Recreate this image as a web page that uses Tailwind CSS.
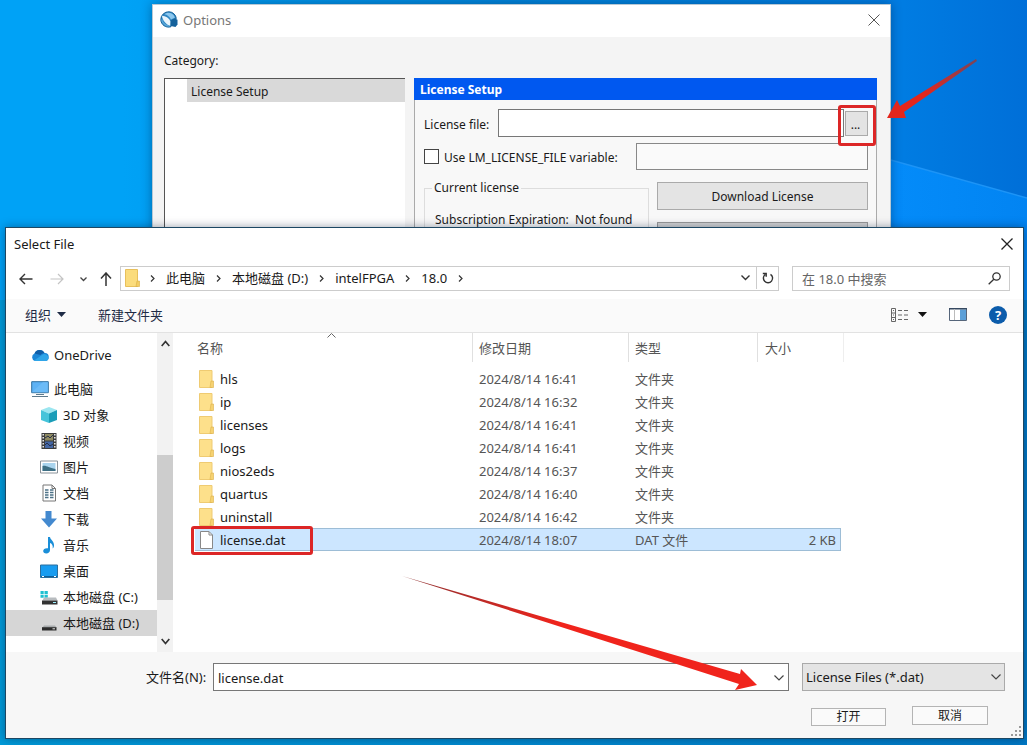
<!DOCTYPE html>
<html lang="zh-CN">
<head>
<meta charset="utf-8">
<meta name="viewport" content="width=device-width, initial-scale=1">
<title>Select File</title>
<script src="https://cdn.jsdelivr.net/npm/@tailwindcss/browser@4"></script>
</head>
<body class="relative min-h-screen overflow-hidden bg-[#0086dc] font-['Noto_Sans','Noto_Sans_CJK_SC',sans-serif] text-[13px] leading-5 text-[#1a1a1a]">

<svg class="absolute inset-0 h-full w-full" viewBox="0 0 1027 745" preserveAspectRatio="none" aria-hidden="true">
  <defs>
    <linearGradient id="sky" x1="0" y1="0" x2="1" y2="0">
      <stop offset="0" stop-color="#00a2f6"/><stop offset=".12" stop-color="#00a2f6"/><stop offset=".5" stop-color="#0084da"/><stop offset=".88" stop-color="#007ce2"/><stop offset="1" stop-color="#006fd8"/>
    </linearGradient>
    <linearGradient id="low" x1="0" y1="0" x2="1" y2="0">
      <stop offset="0" stop-color="#009ad8"/><stop offset="1" stop-color="#0078c4"/>
    </linearGradient>
    <linearGradient id="beam" x1="0" y1="0" x2="1" y2="0">
      <stop offset="0" stop-color="#048cfa"/><stop offset="1" stop-color="#0284f2"/>
    </linearGradient>
  </defs>
  <rect width="1027" height="745" fill="url(#sky)"/>
  <path d="M880 157L1027 198V300H880z" fill="url(#beam)"/>
  <path d="M880 157L1027 198" stroke="#1d94f6" stroke-width="1.5"/>
  <rect y="300" width="1027" height="445" fill="url(#low)"/>
</svg>

<!-- Options window -->
<section class="absolute top-1 right-[136px] left-[152px] h-[260px] overflow-hidden border border-[#b8c8d4] bg-[#f4f4f4] shadow-[0_0_10px_rgba(0,40,80,0.45)]">
  <header class="flex h-8 items-center bg-white pr-[10px] pb-[2px] pl-[7px]">
    <svg class="h-[18px] w-[18px]" viewBox="0 0 18 18" aria-hidden="true">
      <path d="M9 .8a7.500 7.500 0 0 1 7.300 6.700L11 9.500v6.200A7.700 7.700 0 0 1 .8 8.500 7.800 7.800 0 0 1 9 .8z" fill="#2f86c2" stroke="#17649c"/>
      <path d="M4.500 3.300C7 1 12.500 1 15 6.500l-4 2C9.500 5.500 7 3.800 4.500 3.300z" fill="#8cc7ee"/>
      <path d="M2 4.800C5.500 5 9 7 10.500 10.500l-.3 4.500C6 13.500 2.500 9.500 2 4.800z" fill="#eaf5fc"/>
      <path d="M1.700 8.500c.8 3.500 4 6.200 7.800 6.600" fill="none" stroke="#5aa6d8" stroke-width="1.300"/>
      <path d="M10.800 9.500L15 7.500l2.500 1.200v4.800L15.500 16l-4.700-1z" fill="#14619b"/>
    </svg>
    <h1 class="ml-[5px] flex-1 text-[13px] text-[#777]">Options</h1>
    <button type="button" aria-label="Close" class="h-3 w-3">
      <svg class="h-3 w-3" viewBox="0 0 12 12" fill="none" stroke="#555" stroke-width="1"><path d="M.5.5l11 11M11.500.5l-11 11"/></svg>
    </button>
  </header>
  <div class="flex flex-col pr-[13px] pl-[11px]">
    <p class="mt-[14px] mb-[7px] text-[12px]">Category:</p>
    <div class="flex h-[190px] gap-[9px]">
      <ul class="w-[241px] border-t border-l border-[#555] bg-white pl-[22px]">
        <li class="flex h-[23px] items-center bg-[#d9d9d9] pt-[2px] pl-1 text-[12px]">License Setup</li>
      </ul>
      <div class="flex-1">
        <h2 class="flex h-[22px] items-center bg-[#0058f0] pt-[2px] pl-[6px] text-[12px] font-bold text-white">License Setup</h2>
        <div class="h-full border-x border-[#aaa] bg-[#f8f8f8] pt-[9px] pr-[8px] pl-[9px] text-[12px]">
          <div class="flex items-center">
            <label for="licfile" class="w-[74px] pt-[3px]">License file:</label>
            <input id="licfile" type="text" class="h-[28px] min-w-0 flex-1 border border-[#777] bg-white px-1">
            <div class="relative ml-px">
              <button type="button" class="flex h-[25px] w-[23px] items-center justify-center border border-[#aaa] bg-[#e3e3e3] pt-1 pr-[2px]">...</button>
              <span class="absolute -top-[6px] -right-[8px] -bottom-[10px] -left-[7px] rounded-[3px] border-3 border-[#dc2626]"></span>
            </div>
          </div>
          <div class="mt-[6px] flex items-center">
            <input id="lmvar" type="checkbox" class="h-[15px] w-[15px] appearance-none border border-[#444] bg-white">
            <label for="lmvar" class="flex-1 pt-[3px] pl-[5px]">Use LM_LICENSE_FILE variable:</label>
            <input type="text" aria-label="LM_LICENSE_FILE variable" class="h-[27px] w-[232px] border border-[#888] bg-[#fafafa] px-1">
          </div>
          <div class="mt-[8px] flex gap-[8px]">
            <fieldset class="h-[90px] flex-1 border border-[#ddd] px-[10px]">
              <legend class="-ml-[3px] px-[2px]">Current license</legend>
              <p class="mt-[12px] whitespace-pre">Subscription Expiration:  Not found</p>
            </fieldset>
            <div class="flex w-[211px] flex-col gap-[12px] pt-[4px]">
              <button type="button" class="h-[28px] border border-[#aaa] bg-[#e4e4e4] pt-[2px] text-[12px]">Download License</button>
              <button type="button" aria-label="Get license" class="h-[28px] border border-[#999] bg-[#d4d4d4]"></button>
            </div>
          </div>
        </div>
      </div>
    </div>
  </div>
</section>

<!-- Select File window -->
<section class="absolute top-[227px] right-[3px] bottom-[6px] left-[5px] flex flex-col border border-[#1c4763] bg-white shadow-[0_0_9px_rgba(0,20,50,0.4)]">
  <header class="flex h-[33px] items-center pr-[10px] pb-[2px] pl-2">
    <h2 class="flex-1 text-[13px]">Select File</h2>
    <button type="button" aria-label="关闭" class="h-3 w-3">
      <svg class="h-3 w-3" viewBox="0 0 12 12" fill="none" stroke="#222" stroke-width="1.300"><path d="M.5.5l11 11M11.500.5l-11 11"/></svg>
    </button>
  </header>

  <div class="flex h-[38px] items-start pt-[5px] pr-[13px]">
    <nav class="flex h-[26px] w-[114px] items-center pl-[13px]">
      <button type="button" aria-label="返回" class="mr-[17px]"><svg class="h-3 w-[14px]" viewBox="0 0 14 12" fill="none" stroke="#333" stroke-width="1.400"><path d="M13.500 6H1M6 1L1 6l5 5"/></svg></button>
      <button type="button" aria-label="前进" class="mr-[16px]"><svg class="h-3 w-[14px]" viewBox="0 0 14 12" fill="none" stroke="#c4c4c4" stroke-width="1.200"><path d="M.5 6H13M8 1l5 5-5 5"/></svg></button>
      <button type="button" aria-label="最近位置" class="mr-[13px]"><svg class="h-[5px] w-[7px]" viewBox="0 0 7 5" fill="none" stroke="#444" stroke-width="1.300"><path d="M.5.5l3 3 3-3"/></svg></button>
      <button type="button" aria-label="上移"><svg class="h-[14px] w-3" viewBox="0 0 12 14" fill="none" stroke="#333" stroke-width="1.500"><path d="M6 14V1M1 6.500L6 1l5 5.500"/></svg></button>
    </nav>
    <div class="flex h-[25px] flex-1 items-center border border-[#ccc] pb-px pl-1">
      <svg class="h-[18px] w-[15px]" viewBox="0 0 15 18" aria-hidden="true"><path d="M.5.5h12v17H.5z" fill="#fbdc7c" stroke="#e8c05c"/><path d="M12 12h2.500v5.500H11z" fill="#f3cd62" stroke="#d9ae45" stroke-width=".6"/></svg>
      <svg class="ml-[10px] h-[7px] w-[5px]" viewBox="0 0 5 7" fill="none" stroke="#333" stroke-width="1.200"><path d="M1 .5l3 3-3 3"/></svg>
      <a href="#" class="ml-[11px]">此电脑</a>
      <svg class="ml-[11px] h-[7px] w-[5px]" viewBox="0 0 5 7" fill="none" stroke="#333" stroke-width="1.200"><path d="M1 .5l3 3-3 3"/></svg>
      <a href="#" class="ml-[11px]">本地磁盘 (D:)</a>
      <svg class="ml-[11px] h-[7px] w-[5px]" viewBox="0 0 5 7" fill="none" stroke="#333" stroke-width="1.200"><path d="M1 .5l3 3-3 3"/></svg>
      <a href="#" class="ml-[11px]">intelFPGA</a>
      <svg class="ml-[11px] h-[7px] w-[5px]" viewBox="0 0 5 7" fill="none" stroke="#333" stroke-width="1.200"><path d="M1 .5l3 3-3 3"/></svg>
      <a href="#" class="ml-[11px]">18.0</a>
      <svg class="ml-[11px] h-[7px] w-[5px]" viewBox="0 0 5 7" fill="none" stroke="#333" stroke-width="1.200"><path d="M1 .5l3 3-3 3"/></svg>
      <button type="button" aria-label="历史记录" class="mr-[6px] ml-auto"><svg class="h-[6px] w-[9px]" viewBox="0 0 9 6" fill="none" stroke="#333" stroke-width="1.400"><path d="M.5.5l4 4 4-4"/></svg></button>
      <button type="button" aria-label="刷新" class="flex h-full w-[22px] items-center justify-center border-l border-[#ccc]">
        <svg class="h-3 w-3" viewBox="0 0 12 12" fill="none" stroke="#333" stroke-width="1.400"><path d="M3.200 2.500A4.600 4.600 0 1 0 8.500 2.300M.8 1.500h3.400v3.300"/></svg>
      </button>
    </div>
    <div class="ml-[13px] flex h-[25px] w-[218px] items-center border border-[#ccc] pr-[8px] pl-[9px]">
      <input type="search" aria-label="搜索" placeholder="在 18.0 中搜索" class="min-w-0 flex-1 text-[13px] placeholder-[#666] outline-none">
      <svg class="h-[13px] w-[13px]" viewBox="0 0 13 13" fill="none" stroke="#333" stroke-width="1.300" aria-hidden="true"><circle cx="8.500" cy="4.500" r="3.700"/><path d="M5.800 7.200L.7 12.300"/></svg>
    </div>
  </div>

  <div class="flex h-[34px] items-center border-b border-[#e2e2e2] bg-[#fafafa] pr-[16px] pb-[2px] pl-[19px] text-[#1e2b45]">
    <button type="button" class="flex items-center gap-[6px]">组织
      <svg class="h-[5px] w-[9px]" viewBox="0 0 9 5" fill="#1e2b45"><path d="M0 0h9L4.500 5z"/></svg>
    </button>
    <button type="button" class="ml-[32px]">新建文件夹</button>
    <button type="button" aria-label="更改视图" class="ml-auto flex items-center gap-[10px]">
      <svg class="h-[14px] w-[17px]" viewBox="0 0 17 14" fill="none" stroke="#666"><path d="M.5.500h4v13h-4zM.5 5h4M.5 9.500h4M2 2.500h1M2 7h1M2 11.500h1"/><path d="M7 2.500h4M13 2.500h4M7 7h4M13 7h4M7 11.500h4M13 11.500h4"/></svg>
      <svg class="h-[5px] w-[9px]" viewBox="0 0 9 5" fill="#111"><path d="M0 0h9L4.500 5z"/></svg>
    </button>
    <button type="button" aria-label="预览窗格" class="ml-[22px]">
      <svg class="h-[13px] w-[18px]" viewBox="0 0 18 13"><path d="M.5.500h17v12H.5z" fill="#fff" stroke="#56657a"/><path d="M11 1.500h6v10.500h-6z" fill="#5b9fd8"/><path d="M0 .8h18" stroke="#33475e" stroke-width="1.400"/><path d="M5.500 1v11" stroke="#bbb"/></svg>
    </button>
    <button type="button" aria-label="帮助" class="ml-[22px] flex h-[18px] w-[18px] items-center justify-center rounded-full bg-[#0c5cab] text-[13px] font-bold text-white">?</button>
  </div>

  <div class="flex min-h-0 flex-1">
    <ul class="w-[151px] pt-[9px] [&>li]:flex [&>li]:h-[26px] [&>li]:items-center [&>li]:pl-[34px] [&>li>svg]:mr-[5px] [&>li>svg]:h-[18px] [&>li>svg]:w-[18px]">
      <li class="mb-2 pl-[25px]!">
        <svg viewBox="0 0 18 18"><path d="M4 15a4 4 0 0 1-.5-7.500A5.500 5.500 0 0 1 13.500 7 4 4 0 0 1 14 15z" fill="#1b86d6"/><path d="M3.500 7.500A5.500 5.500 0 0 1 13.500 7c-2 0-3 1-4 2z" fill="#0f5ea8"/><path d="M3 14.500L11 9a4 4 0 0 1 6.500 3A3.200 3.200 0 0 1 14.500 15H4z" fill="#2fa5e8"/></svg>OneDrive</li>
      <li class="pl-[25px]!">
        <svg viewBox="0 0 18 18"><path d="M.7 1.700h16.600v11H.7z" fill="#5db2f5" stroke="#2f6f9f"/><path d="M1 12L12 2h5v10.500H1z" fill="#7cc4fa" opacity=".5"/><path d="M5 14.500h8M1 16.500h16" stroke="#5e7a8c"/></svg>此电脑</li>
      <li><svg viewBox="0 0 18 18"><path d="M1 4l8-3 8 3-8 3.500z" fill="#9be6f0"/><path d="M1 4l8 3.500V17l-8-3z" fill="#45c4da"/><path d="M17 4L9 7.500V17l8-3z" fill="#1a9db8"/></svg>3D 对象</li>
      <li><svg viewBox="0 0 18 18"><path d="M1.500 1h15v16h-15z" fill="#3c3c3c"/><path d="M5 2h8v6.500H5z" fill="#8f8a60"/><path d="M5 9.500h8V16H5z" fill="#4466a4"/><path d="M5 6l3-2 2 2 3-3M5 13l2-2 3 3 3-2" stroke="#27304a" fill="none"/><path d="M3.200 2v15M14.800 2v15" stroke="#eee" stroke-width="1.500" stroke-dasharray="1.500 1.500"/></svg>视频</li>
      <li><svg viewBox="0 0 18 18"><path d="M.5 3h17v12H.5z" fill="#fff" stroke="#8a9299"/><path d="M2.500 5h13v8h-13z" fill="#a9d4ee"/><path d="M2.500 8c4-1 6 2 13 3v2h-13z" fill="#3d6f84"/></svg>图片</li>
      <li><svg viewBox="0 0 18 18"><path d="M3 1h9l3.500 3.500V17H3z" fill="#fff" stroke="#777"/><path d="M12 1v3.500h3.500" fill="none" stroke="#777"/><path d="M5 6h3.500M5 8.500h3.500M10 6h3.500M10 8.500h3.500M5 11h3.500M10 11h3.500M5 13.500h3.500M10 13.500h3.500" stroke="#4c7186" stroke-width="1.300"/></svg>文档</li>
      <li><svg viewBox="0 0 18 18"><path d="M5.500 1h6v7.500H17L9 17.500 1 8.500h4.500z" fill="#4389cf"/></svg>下载</li>
      <li><svg viewBox="0 0 18 18"><path d="M8 1h2c.3 3 4.500 4 4 9-.2 1.200-.6 1.800-1.300 2.500.5-3.500-1-5-2.700-5.500V14c0 2.200-1.700 3.500-3.700 3.500S3.200 16.300 3.200 15c0-1.700 2-3.200 4.800-2.700z" fill="#1a8ed8"/></svg>音乐</li>
      <li><svg viewBox="0 0 18 18"><path d="M.5 3h17v12.500H.5z" fill="#189cf0" stroke="#2b6f9e"/><path d="M1 14.500h16" stroke="#0d5f9a"/><path d="M2 14.500h2M14 14.500h2" stroke="#fff"/></svg>桌面</li>
      <li><svg viewBox="0 0 18 18"><path d="M.5 3h3.200v3H.5zM4.500 3h3.300v3H4.500zM.5 6.800h3.200v3H.5zM4.500 6.800h3.300v3H4.500z" fill="#1fc0d0"/><path d="M4 9.500h12l1.500 3H2.500z" fill="#b8bcbf"/><path d="M2 12.500h15.500v4H2z" fill="#333"/><path d="M13 14.500h3" stroke="#9df0ff"/></svg>本地磁盘 (C:)</li>
      <li class="bg-[#d6d6d6]"><svg viewBox="0 0 18 18"><path d="M4 11.500h11l1.500 2H2.500z" fill="#a8abad"/><path d="M2 13.200h14.500v3.300H2z" fill="#2c2c2c"/><path d="M12.500 14.800h2.500" stroke="#e6e6e6"/></svg>本地磁盘 (D:)</li>
    </ul>
    <div class="flex w-4 flex-col items-center bg-[#f2f2f2] py-[7px]">
      <svg class="h-[7px] w-[9px]" viewBox="0 0 9 7" fill="none" stroke="#333" stroke-width="1.700"><path d="M.7 6l3.800-4.500L8.300 6"/></svg>
      <div class="mt-[108px] h-[145px] w-full bg-[#cdcdcd]"></div>
      <svg class="mt-auto h-[7px] w-[9px]" viewBox="0 0 9 7" fill="none" stroke="#333" stroke-width="1.700"><path d="M.7 1l3.800 4.500L8.300 1"/></svg>
    </div>

    <div class="relative min-w-0 flex-1 pl-[22px]">
      <svg class="absolute top-0 left-[154px] h-[5px] w-[9px]" viewBox="0 0 9 5" fill="none" stroke="#666"><path d="M.5 4.500l4-4 4 4"/></svg>
      <table class="w-[649px] table-fixed border-separate border-spacing-0 text-left text-[#555] [&_tbody_td]:h-[23px] [&_td]:p-0 [&_th]:p-0 [&_th]:font-normal">
        <colgroup><col class="w-[278px]"><col class="w-[156px]"><col class="w-[129px]"><col class="w-[83px]"><col class="w-[3px]"></colgroup>
        <thead>
          <tr class="h-[29px]">
            <th scope="col" class="border-r border-[#e0e0e0] pl-[2px]!">名称</th>
            <th scope="col" class="border-r border-[#e0e0e0] pl-[6px]!">修改日期</th>
            <th scope="col" class="border-r border-[#e0e0e0] pl-[6px]!">类型</th>
            <th scope="col" class="pl-[7px]!">大小</th>
            <td class="border-r border-[#eee]"></td>
          </tr>
          <tr class="h-[5px]"><td colspan="5"></td></tr>
        </thead>
        <tbody id="files"></tbody>
      </table>
    </div>
  </div>

  <footer class="flex h-[86px] flex-col bg-[#f7f7f7] pt-[11px] pr-[18px] pl-[140px]">
    <div class="flex items-center">
      <label for="fname" class="w-[67px]">文件名(N):</label>
      <div class="relative flex-1">
        <input id="fname" type="text" value="license.dat" class="h-[28px] w-full border border-[#777] bg-white px-1 pt-px text-[13px]">
        <svg class="absolute top-[12px] right-[5px] h-[6px] w-[10px]" viewBox="0 0 10 6" fill="none" stroke="#444" stroke-width="1.200"><path d="M.5.500l4.500 4.500L9.500.500"/></svg>
      </div>
      <div class="relative ml-[13px] w-[203px]">
        <select aria-label="文件类型" class="h-[28px] w-full appearance-none border border-[#aaa] bg-[#e4e4e4] px-[3px] text-[13px]"><option>License Files (*.dat)</option></select>
        <svg class="pointer-events-none absolute top-[11px] right-1 h-[6px] w-[10px]" viewBox="0 0 10 6" fill="none" stroke="#444" stroke-width="1.200"><path d="M.5.500l4.500 4.500L9.500.500"/></svg>
      </div>
    </div>
    <div class="mt-[15px] flex items-start justify-end gap-[26px] pr-[17px] text-[12px]">
      <button type="button" class="mt-[2px] h-[18px] w-[75px] border border-[#b4b4b4] bg-[#fafafa] leading-4">打开</button>
      <button type="button" class="h-[19px] w-[76px] border border-[#b4b4b4] bg-[#fafafa] leading-4">取消</button>
    </div>
  </footer>
  <svg class="absolute right-[2px] bottom-[2px] h-[10px] w-[10px]" viewBox="0 0 10 10" fill="#999" aria-hidden="true"><path d="M8 0h2v2H8zM8 4h2v2H8zM4 4h2v2H4zM8 8h2v2H8zM4 8h2v2H4zM0 8h2v2H0z"/></svg>
</section>

<!-- Annotation arrows -->
<svg class="pointer-events-none absolute top-0 left-0 h-[745px] w-[1027px]" viewBox="0 0 1027 745" aria-hidden="true">
  <defs>
    <linearGradient id="tail" gradientUnits="userSpaceOnUse" x1="976" y1="60" x2="925" y2="95"><stop offset="0" stop-color="#7a4458"/><stop offset="1" stop-color="#e4261c"/></linearGradient>
    <linearGradient id="tail2" gradientUnits="userSpaceOnUse" x1="402" y1="576" x2="560" y2="622"><stop offset="0" stop-color="#8a3030"/><stop offset="1" stop-color="#f0241c"/></linearGradient>
  </defs>
  <path d="M887 118L897 100L900 106L976 59L977 61L904 112L906 118z" fill="url(#tail)"/>
  <path d="M402 576L740 674L741 669L757 685L735 690L739 684z" fill="url(#tail2)"/>
</svg>

<script>
  const files = [
    ['hls', '2024/8/14 16:41'], ['ip', '2024/8/14 16:32'], ['licenses', '2024/8/14 16:41'], ['logs', '2024/8/14 16:41'],
    ['nios2eds', '2024/8/14 16:37'], ['quartus', '2024/8/14 16:40'], ['uninstall', '2024/8/14 16:42'],
    ['license.dat', '2024/8/14 18:07', 'DAT 文件', '2 KB']
  ];
  const folder = '<svg class="h-[18px] w-[15px]" viewBox="0 0 15 18"><path d="M.5.500h12.500v17H.5z" fill="#fde08b" stroke="#efcb72"/><path d="M12 11h2.500v6.500H11z" fill="#f6d271" stroke="#dcb04c" stroke-width=".6"/></svg>';
  const page = '<svg class="h-[18px] w-[15px]" viewBox="0 0 15 18"><path d="M1.500.500H10L13.500 4v13.500h-12z" fill="#fff" stroke="#888"/><path d="M10 .5V4h3.500" fill="none" stroke="#888"/></svg>';
  document.getElementById('files').innerHTML = files.map(([name, date, type, size]) => {
    const line = size ? 'border-y border-[#9dbdd6] bg-[#cce6ff]' : '';
    const mark = size ? '<span class="absolute -top-[3px] -left-1 h-[29px] w-[122px] rounded-[3px] border-3 border-[#dc2626]"></span>' : '';
    return `<tr><td class="relative ${line}"><div class="flex items-center gap-[6px] pl-1 text-[#1a1a1a]">${size ? page : folder}${name}</div>${mark}</td>
      <td class="${line} pl-[6px]!">${date}</td><td class="${line} pl-[6px]!">${type || '文件夹'}</td>
      <td class="${line} ${size ? 'border-r' : ''} pr-1! text-right">${size || ''}</td></tr>`;
  }).join('');
</script>
</body>
</html>
